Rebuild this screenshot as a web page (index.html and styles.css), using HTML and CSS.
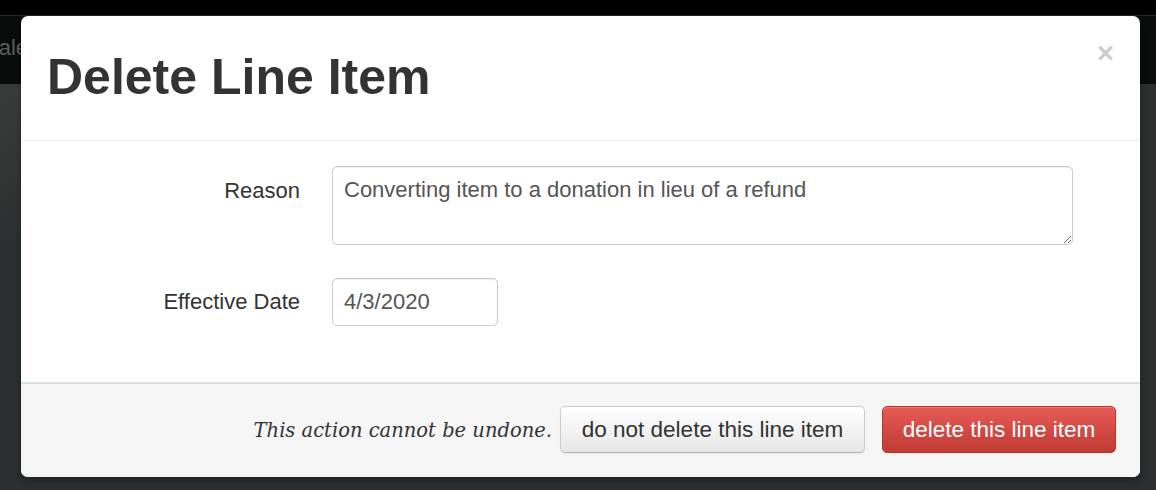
FILE: index.html
```html
<!DOCTYPE html>
<html>
<head>
<meta charset="utf-8">
<link rel="stylesheet" href="styles.css">
</head>
<body>
<div class="page">
  <div class="topbar"><span class="brand">Sale</span></div>
  <div class="content"><div class="sidepanel"></div></div>
</div>
<div class="modal">
  <div class="modal-header">
    <h3 class="title">Delete Line Item</h3>
    <span class="close">×</span>
  </div>
  <div class="modal-body">
    <div class="row">
      <label class="label">Reason</label>
      <div class="field"><textarea class="textarea">Converting item to a donation in lieu of a refund</textarea></div>
    </div>
    <div class="row">
      <label class="label label-date">Effective Date</label>
      <div class="field"><input class="input" type="text" value="4/3/2020"></div>
    </div>
  </div>
  <div class="modal-footer">
    <em class="warning">This action cannot be undone.</em>
    <button class="btn btn-default">do not delete this line item</button>
    <button class="btn btn-danger">delete this line item</button>
  </div>
</div>
</body>
</html>
```
FILE: styles.css
```css
html, body {
  margin: 0;
  padding: 0;
  height: 100%;
}
body {
  background: #2b2e2e;
  font-family: "Liberation Sans", Arial, sans-serif;
  overflow: hidden;
}
.page {
  height: 490px;
  display: flex;
  flex-direction: column;
}
.topbar {
  height: 68px;
  margin-top: 15px;
  background: #0a0c0c;
  border-top: 1px solid #12302f;
  display: flex;
  align-items: center;
}
.brand {
  color: #5a5d5d;
  font-size: 22px;
  margin-left: -16px;
  padding-bottom: 4px;
}
.content {
  flex: 1;
  background: #2c2f2f;
  display: flex;
}
.sidepanel {
  width: 21px;
  background: linear-gradient(to bottom, #3a3c3b, #2c2f2f 40%);
}
body::before {
  content: "";
  position: absolute;
  left: 0; top: 0; right: 0;
  height: 15px;
  background: #000;
}
.modal {
  position: absolute;
  left: 21px;
  top: 16px;
  width: 1119px;
  background: #fff;
  border-radius: 7px;
  box-shadow: 0 3px 7px rgba(0,0,0,0.3);
  overflow: hidden;
}
.modal-header {
  height: 124px;
  border-bottom: 1px solid #eeeeee;
  display: flex;
  align-items: flex-start;
  justify-content: space-between;
  padding: 0 26px;
}
.title {
  margin: 33px 0 0 0;
  font-size: 50px;
  line-height: 56px;
  font-weight: bold;
  color: #333333;
}
.close {
  margin-top: 22px;
  font-size: 29px;
  font-weight: bold;
  color: #cccccc;
  line-height: 30px;
}
.modal-body {
  height: 241px;
  padding-top: 25px;
  box-sizing: border-box;
  display: flex;
  flex-direction: column;
  gap: 33px;
}
.row {
  display: flex;
  align-items: flex-start;
}
.label {
  width: 279px;
  text-align: right;
  font-size: 22px;
  color: #333;
  padding-top: 12px;
  line-height: 26px;
}
.label-date {
  padding-top: 11px;
}
.field {
  margin-left: 32px;
}
.textarea {
  display: block;
  width: 741px;
  height: 79px;
  box-sizing: border-box;
  border: 1px solid #cccccc;
  border-radius: 5px;
  padding: 10px 11px 6px;
  font-family: "Liberation Sans", Arial, sans-serif;
  font-size: 22px;
  line-height: 26px;
  color: #555;
  box-shadow: inset 0 1px 1px rgba(0,0,0,0.075);
  resize: both;
  margin: 0;
}
.input {
  display: block;
  width: 166px;
  height: 48px;
  box-sizing: border-box;
  border: 1px solid #cccccc;
  border-radius: 5px;
  padding: 0 11px;
  font-family: "Liberation Sans", Arial, sans-serif;
  font-size: 22px;
  color: #555;
  box-shadow: inset 0 1px 1px rgba(0,0,0,0.075);
  margin: 0;
}
.modal-footer {
  height: 95px;
  box-sizing: border-box;
  background: #f5f5f5;
  border-top: 2px solid #dddddd;
  display: flex;
  align-items: center;
  justify-content: flex-end;
  padding: 0 24px 0 0;
}
.warning {
  font-family: "DejaVu Serif", Georgia, serif;
  font-style: italic;
  font-size: 19.5px;
  color: #333;
  margin-right: 8px;
}
.btn {
  height: 47px;
  font-family: "Liberation Sans", Arial, sans-serif;
  font-size: 22.5px;
  border-radius: 5px;
  padding: 0 10px;
  cursor: pointer;
  margin-top: -2px;
}
.btn-default {
  color: #333;
  background: linear-gradient(to bottom, #ffffff, #e6e6e6);
  border: 1px solid #cccccc;
  border-bottom-color: #b3b3b3;
  box-shadow: inset 0 1px 0 rgba(255,255,255,0.2), 0 1px 2px rgba(0,0,0,0.05);
  width: 305px;
}
.btn-danger {
  margin-left: 17px;
  color: #fff;
  background: linear-gradient(to bottom, #e65b56, #c13a33);
  border: 1px solid #b8342e;
  box-shadow: inset 0 1px 0 rgba(255,255,255,0.2), 0 1px 2px rgba(0,0,0,0.05);
  width: 234px;
}
```
